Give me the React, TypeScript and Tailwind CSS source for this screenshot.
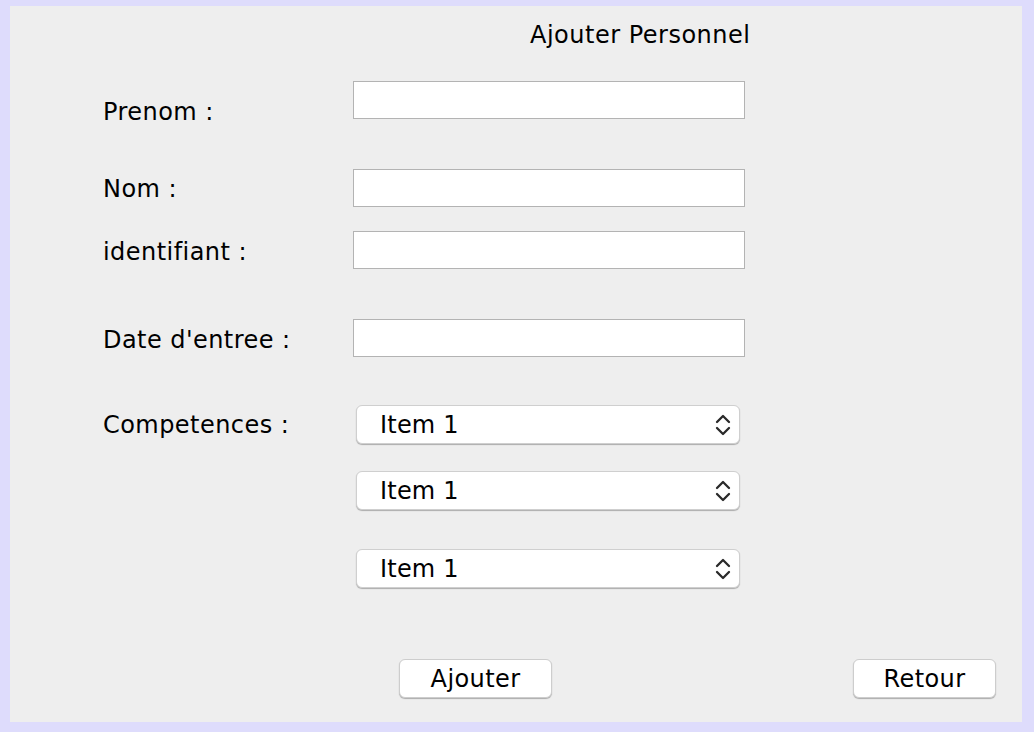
import React from "react";

const font = { fontFamily: '"DejaVu Sans", "Noto Sans", sans-serif' };

function Chevrons() {
  return (
    <svg width="18" height="24" viewBox="0 0 18 24" fill="none" stroke="#2a2a2a" strokeWidth="2.3" strokeLinecap="round" strokeLinejoin="round">
      <path d="M3 9 L9 3 L15 9" />
      <path d="M3 15 L9 21 L15 15" />
    </svg>
  );
}

function Combo() {
  return (
    <div className="w-[384px] h-[39px] bg-white rounded-[6px] border border-[#cfcfcf] shadow-[0_1px_1px_rgba(0,0,0,0.28)] flex items-center justify-between pl-[23px] pr-[7px]">
      <span className="text-[24px] leading-[28px] text-black mt-[1px] tracking-[0.2px]">Item 1</span>
      <Chevrons />
    </div>
  );
}

function Field() {
  return <div className="w-[392px] h-[38px] bg-white border border-[#b3b3b3]" />;
}

function Label({ text, mt }: { text: string; mt: string }) {
  return (
    <div className={`w-[250px] shrink-0 text-[24px] leading-[28px] text-black tracking-[0.45px] ${mt}`}>{text}</div>
  );
}

export default function App() {
  return (
    <div className="w-[1034px] h-[732px] bg-[#dedcfc] pt-[6px] pl-[10px]" style={font}>
      <div className="w-[1012px] h-[716px] bg-[#eeeeee] flex flex-col">
        <div className="mt-[15px] pl-[520px] text-[24px] leading-[28px] text-black tracking-[0.5px]">Ajouter Personnel</div>

        <div className="mt-[32px] pl-[93px] flex flex-col">
          <div className="h-[88px] flex items-start">
            <Label text="Prenom :" mt="mt-[17px]" />
            <Field />
          </div>
          <div className="h-[62px] flex items-start">
            <Label text="Nom :" mt="mt-[6px]" />
            <Field />
          </div>
          <div className="h-[88px] flex items-start">
            <Label text="identifiant :" mt="mt-[7px]" />
            <Field />
          </div>
          <div className="h-[86px] flex items-start">
            <Label text="Date d'entree :" mt="mt-[7px]" />
            <Field />
          </div>
          <div className="flex items-start">
            <Label text="Competences :" mt="mt-[6px]" />
            <div className="ml-[3px] flex flex-col">
              <Combo />
              <div className="mt-[27px]">
                <Combo />
              </div>
              <div className="mt-[39px]">
                <Combo />
              </div>
            </div>
          </div>
        </div>

        <div className="mt-[71px] flex items-start">
          <div className="ml-[389px] w-[153px] h-[39px] bg-white rounded-[6px] border border-[#cdcdcd] shadow-[0_1px_1px_rgba(0,0,0,0.28)] flex items-center justify-center text-[24px] leading-[28px] text-black tracking-[0.4px]">
            Ajouter
          </div>
          <div className="ml-[301px] w-[143px] h-[39px] bg-white rounded-[6px] border border-[#cdcdcd] shadow-[0_1px_1px_rgba(0,0,0,0.28)] flex items-center justify-center text-[24px] leading-[28px] text-black tracking-[0.4px]">
            Retour
          </div>
        </div>
      </div>
    </div>
  );
}
